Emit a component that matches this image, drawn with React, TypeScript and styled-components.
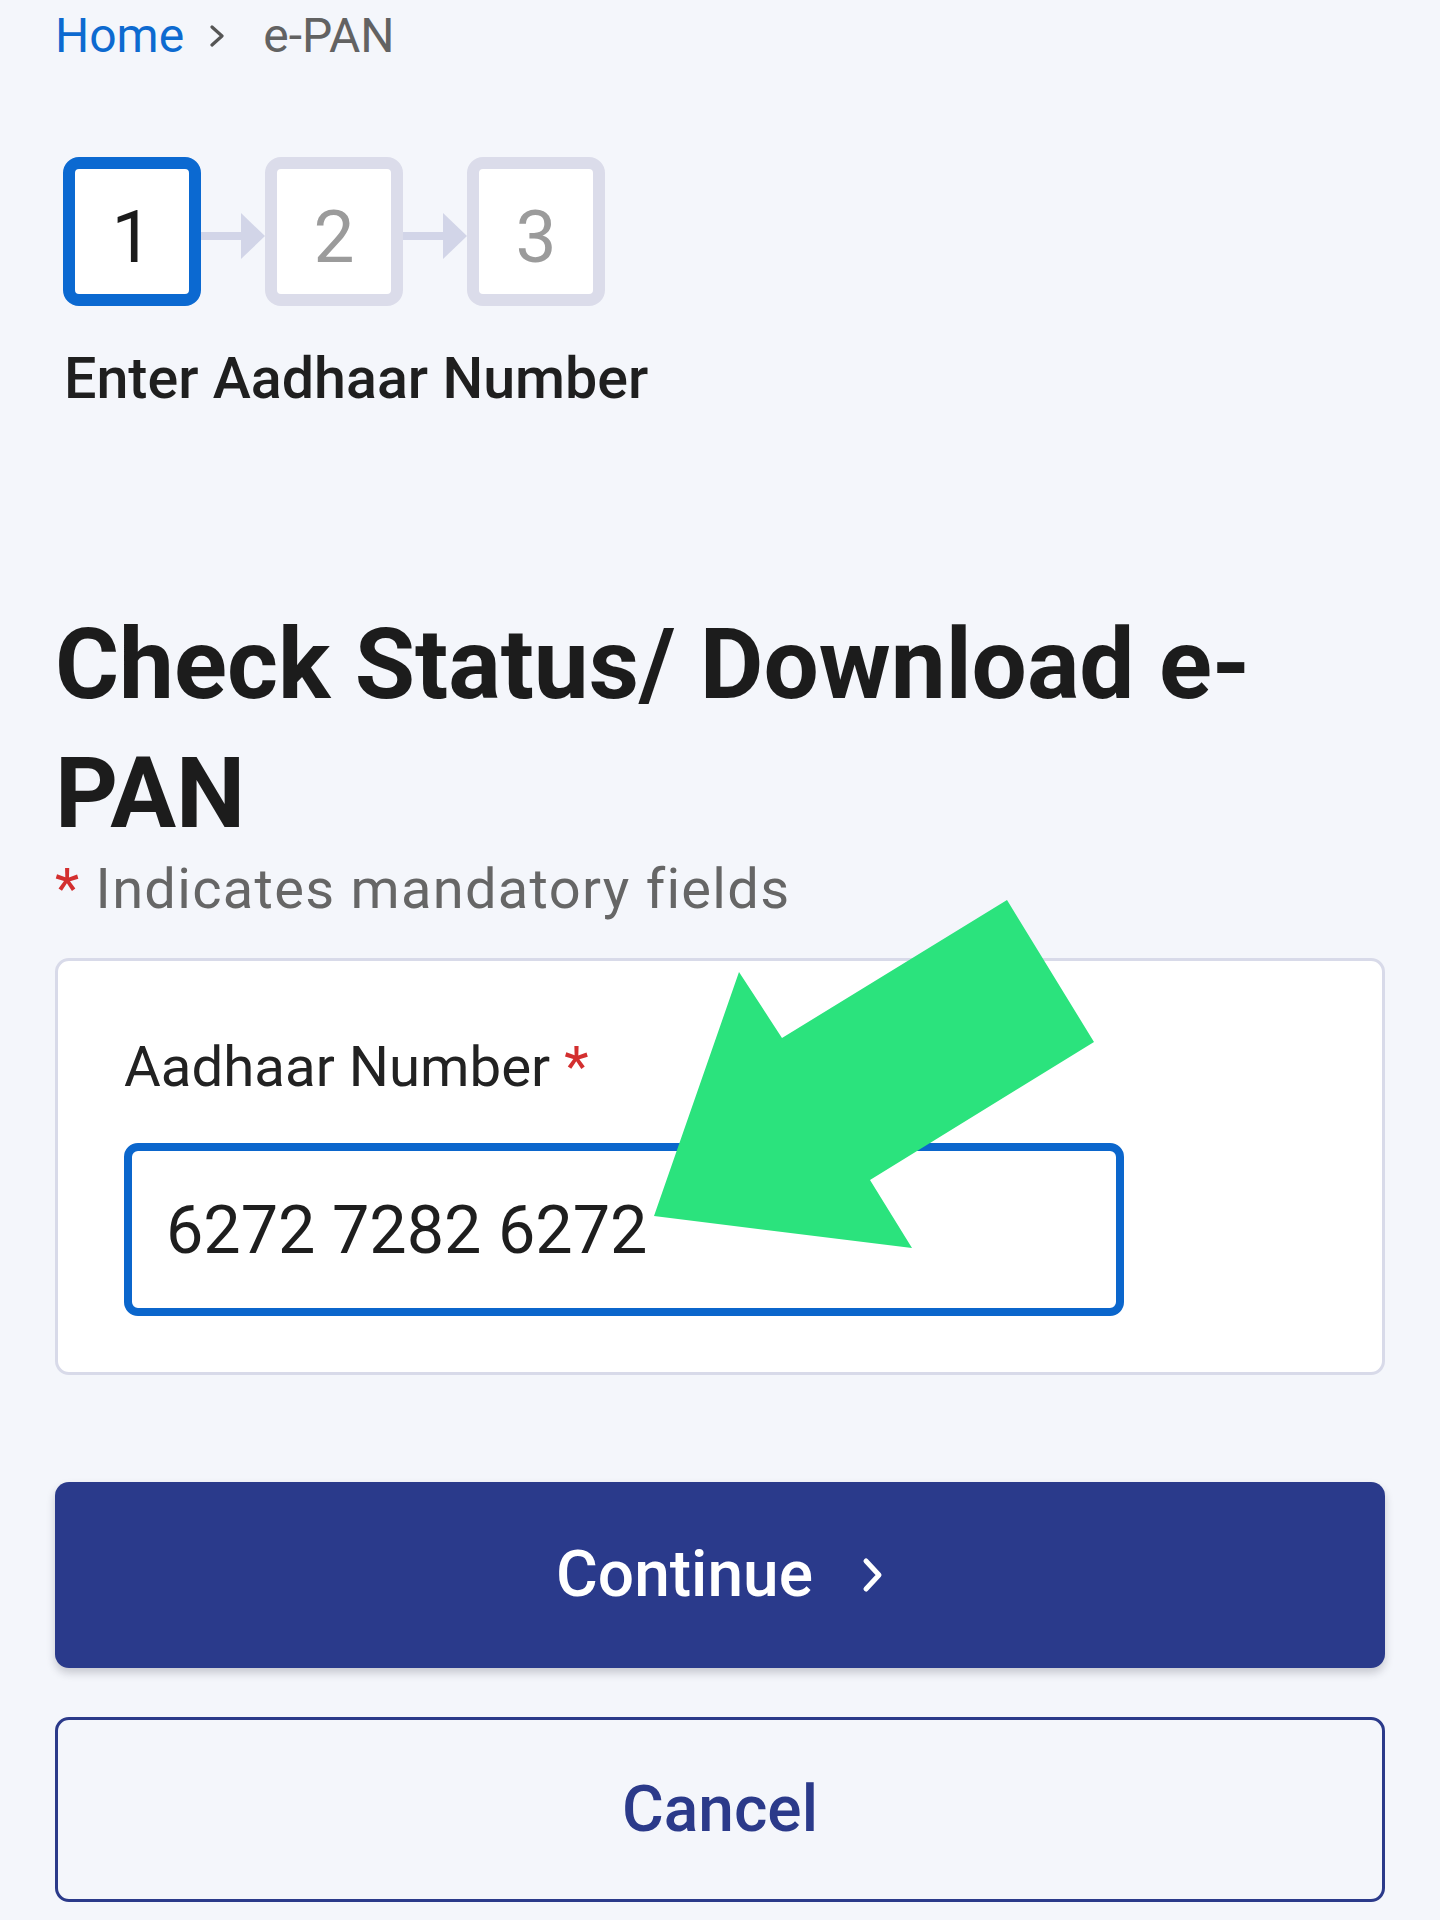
import React from "react";
import styled, { createGlobalStyle } from "styled-components";

const GlobalStyle = createGlobalStyle`
  html, body {
    margin: 0;
    padding: 0;
    background: #f4f6fb;
  }
  body {
    font-family: Roboto, "Liberation Sans", Arial, sans-serif;
    color: #1d1d1d;
  }
  * { box-sizing: border-box; }
`;

const Page = styled.div`
  position: relative;
  min-height: 1920px;
  padding: 8px 55px 0;
  background: #f4f6fb;
`;

const Breadcrumb = styled.nav`
  display: flex;
  align-items: center;
  height: 56px;
  font-size: 48px;
  line-height: 56px;
`;

const CrumbLink = styled.a`
  color: #0d6ad0;
  text-decoration: none;
`;

const CrumbSep = styled.svg`
  width: 16px;
  height: 22px;
  margin: 0 38px 0 25px;
`;

const CrumbCurrent = styled.span`
  color: #626262;
`;

const Stepper = styled.div`
  display: flex;
  align-items: stretch;
  margin-top: 93px;
  padding-left: 8px;
`;

const StepBox = styled.div<{ $active?: boolean }>`
  width: 138px;
  height: 149px;
  border: 12px solid ${(p) => (p.$active ? "#0b69d1" : "#dbdcea")};
  border-radius: 16px;
  background: #ffffff;
  display: flex;
  align-items: center;
  justify-content: center;
  padding-top: 12px;
  font-size: 73px;
  line-height: 73px;
  color: ${(p) => (p.$active ? "#1b1b1b" : "#9b9b9b")};
`;

const Connector = styled.svg`
  width: 64px;
  height: 149px;
  flex: none;
`;

const StepLabel = styled.div`
  margin-top: 39px;
  padding-left: 9px;
  font-size: 57.4px;
  line-height: 68px;
  font-weight: 500;
  color: #1f1f1f;
`;

const Title = styled.h1`
  margin: 187px 0 0;
  font-size: 98px;
  line-height: 129px;
  font-weight: 700;
  color: #1c1c1c;
`;

const Mandatory = styled.p`
  margin: 0;
  font-size: 56px;
  line-height: 62px;
  letter-spacing: 1.3px;
  color: #666666;
`;

const Req = styled.span`
  color: #d32f2f;
`;

const Card = styled.section`
  margin-top: 38px;
  background: #ffffff;
  border: 3px solid #d8dae9;
  border-radius: 14px;
  padding: 72px 66px 56px;
`;

const FieldLabel = styled.label`
  display: block;
  font-size: 56.4px;
  line-height: 68px;
  color: #222222;
`;

const TextInput = styled.input`
  display: block;
  margin-top: 42px;
  width: 1000px;
  height: 173px;
  border: 8px solid #0b66cc;
  border-radius: 14px;
  padding: 0 0 0 34px;
  background: #ffffff;
  font-family: Roboto, "Liberation Sans", Arial, sans-serif;
  font-size: 66.5px;
  color: #1e1e1e;
  outline: none;
`;

const Button = styled.button<{ $primary?: boolean }>`
  display: flex;
  align-items: center;
  justify-content: center;
  width: 100%;
  height: ${(p) => (p.$primary ? "186px" : "185px")};
  margin-top: ${(p) => (p.$primary ? "107px" : "49px")};
  border-radius: 14px;
  border: ${(p) => (p.$primary ? "none" : "3px solid #2b3a8a")};
  background: ${(p) => (p.$primary ? "#2a3a8b" : "transparent")};
  color: ${(p) => (p.$primary ? "#ffffff" : "#2b3a8a")};
  box-shadow: ${(p) =>
    p.$primary ? "0 5px 9px rgba(40, 40, 60, 0.22)" : "none"};
  font-family: Roboto, "Liberation Sans", Arial, sans-serif;
  font-size: 64px;
  font-weight: 500;
  line-height: 1;
  cursor: pointer;
`;

const ButtonChevron = styled.svg`
  width: 22px;
  height: 36px;
  margin-left: 49px;
`;

const ArrowOverlay = styled.svg`
  position: absolute;
  left: 650px;
  top: 896px;
  width: 450px;
  height: 356px;
  pointer-events: none;
`;

const StepConnector = () => (
  <Connector viewBox="0 0 64 149">
    <rect x="0" y="75" width="42" height="8" fill="#d2d5e8" />
    <polygon points="40,56 64,79 40,102" fill="#d2d5e8" />
  </Connector>
);

export default function App() {
  return (
    <>
      <GlobalStyle />
      <Page>
        <Breadcrumb>
          <CrumbLink href="#">Home</CrumbLink>
          <CrumbSep viewBox="0 0 16 22">
            <polyline
              points="3,2 13,11 3,20"
              fill="none"
              stroke="#555"
              strokeWidth="3.2"
              strokeLinecap="round"
              strokeLinejoin="round"
            />
          </CrumbSep>
          <CrumbCurrent>e-PAN</CrumbCurrent>
        </Breadcrumb>

        <Stepper>
          <StepBox $active>1</StepBox>
          <StepConnector />
          <StepBox>2</StepBox>
          <StepConnector />
          <StepBox>3</StepBox>
        </Stepper>
        <StepLabel>Enter Aadhaar Number</StepLabel>

        <Title>Check Status/ Download e-PAN</Title>
        <Mandatory>
          <Req>*</Req> Indicates mandatory fields
        </Mandatory>

        <Card>
          <FieldLabel>
            Aadhaar Number <Req>*</Req>
          </FieldLabel>
          <TextInput type="text" readOnly value="6272 7282 6272" />
        </Card>

        <Button $primary>
          Continue
          <ButtonChevron viewBox="0 0 22 36">
            <polyline
              points="4,4 17,18 4,32"
              fill="none"
              stroke="#ffffff"
              strokeWidth="5"
              strokeLinecap="round"
              strokeLinejoin="round"
            />
          </ButtonChevron>
        </Button>
        <Button>Cancel</Button>

        <ArrowOverlay viewBox="0 0 450 356">
          <polygon
            points="4,320 89,76 132,142 357,4 444,146 220,284 262,352"
            fill="#2be37d"
          />
        </ArrowOverlay>
      </Page>
    </>
  );
}
